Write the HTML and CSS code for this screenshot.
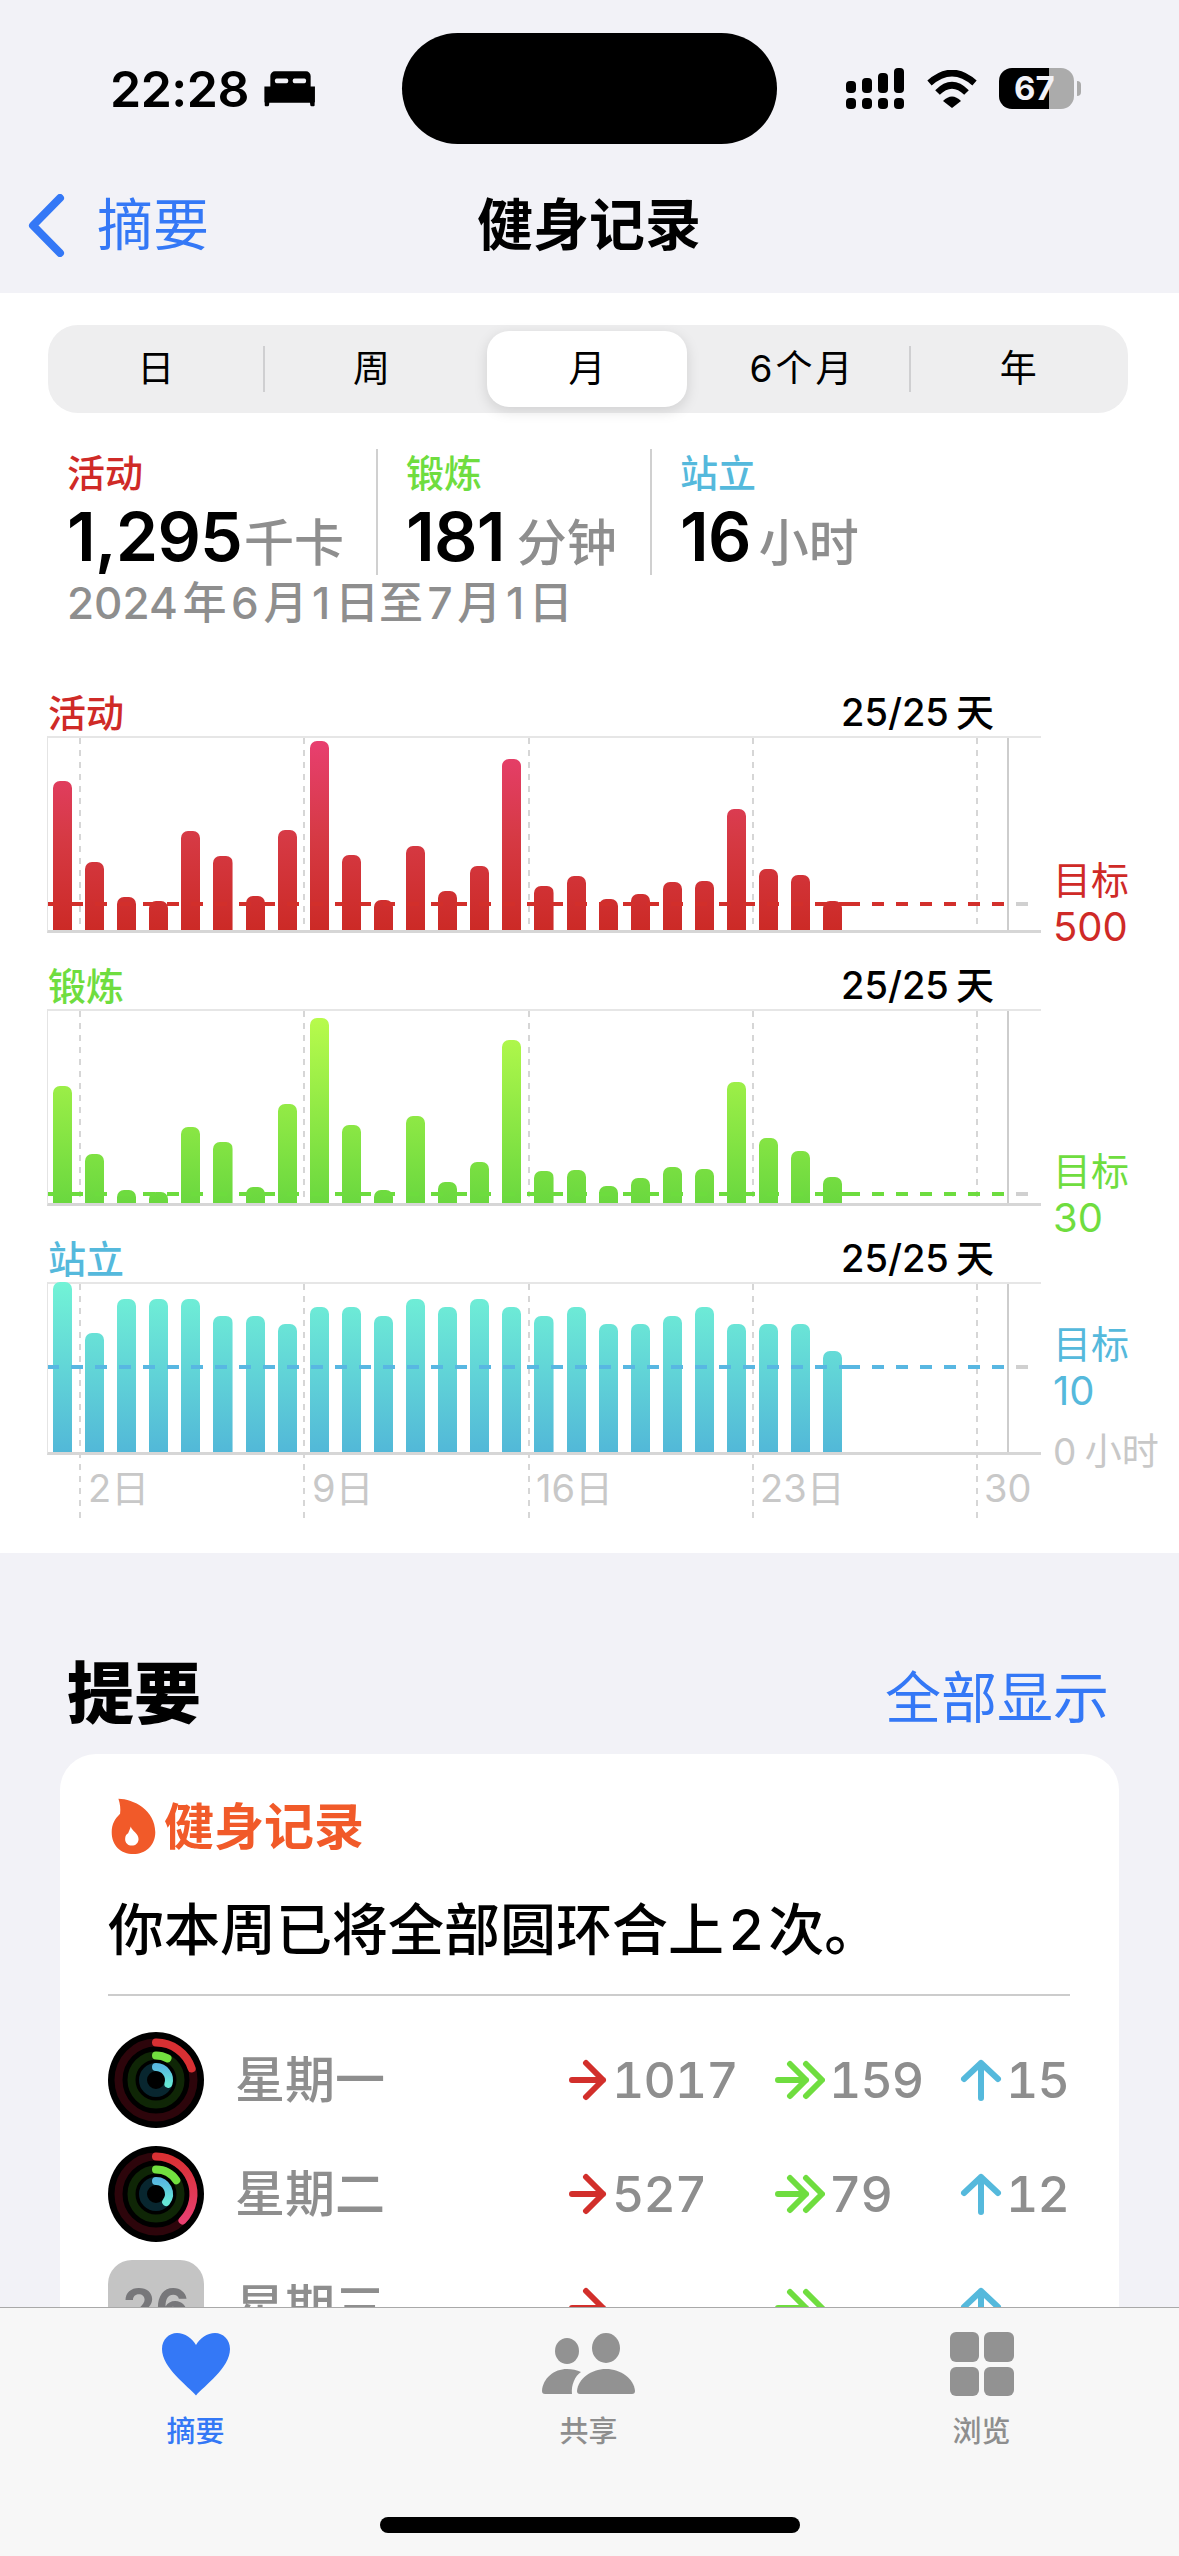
FILE: index.html
```html
<!DOCTYPE html>
<html lang="zh-CN">
<head>
<meta charset="utf-8">
<title>健身记录</title>
<link rel="stylesheet" href="styles.css">
</head>
<body>
<div class="screen">
  <header class="top">
    <div class="status">
      <div class="status-left">
        <span class="time">22:28</span>
        <svg class="bed" viewBox="488 28 160 112"><path d="M524 32h94a14 14 0 0 1 14 14v32h13v47a12 12 0 0 1-1 2v8a3 3 0 0 1-3 3h-6a4 4 0 0 1-4-4l-1-7H507l-1 7a4 4 0 0 1-4 4h-6a3 3 0 0 1-3-3v-8a12 12 0 0 1-1-2V78h18V46a14 14 0 0 1 14-14z"/><rect x="524" y="54" width="40" height="14" rx="5" fill="#f2f2f7"/><rect x="578" y="54" width="40" height="14" rx="5" fill="#f2f2f7"/></svg>
      </div>
      <div class="island"></div>
      <div class="status-right">
        <svg class="signal" viewBox="0 0 58 41"><rect x="0" y="13" width="10" height="12" rx="4"/><rect x="16" y="10" width="10" height="15" rx="4"/><rect x="32" y="5" width="10" height="20" rx="4"/><rect x="48" y="0" width="10" height="25" rx="4"/><rect x="0" y="30" width="10" height="11" rx="4"/><rect x="16" y="30" width="10" height="11" rx="4"/><rect x="32" y="30" width="10" height="11" rx="4"/><rect x="48" y="30" width="10" height="11" rx="4"/></svg>
        <svg class="wifi" viewBox="0 0 50 38"><path class="wifi-arc" d="M2.5 13Q25-7 47.500 13"/><path class="wifi-arc" d="M10.500 22.500Q25 8 39.500 22.500"/><path d="M16 31Q25 22 34 31L25 38Z"/></svg>
        <div class="battery"><span>67</span></div>
      </div>
    </div>
    <nav class="nav">
      <div class="back">
        <svg class="chevron" viewBox="0 0 37 63"><path d="M32 4 5 31.500 32 59"/></svg>
        <span>摘要</span>
      </div>
      <h1 class="nav-title">健身记录</h1>
    </nav>
  </header>

  <section class="sheet">
    <div class="seg">
      <div class="seg-item">日</div>
      <div class="seg-item sep">周</div>
      <div class="seg-item active"><span>月</span></div>
      <div class="seg-item spaced">6个月</div>
      <div class="seg-item sep">年</div>
    </div>

    <div class="stats">
      <div class="stat first">
        <div class="stat-label red">活动</div>
        <div class="stat-value">1,295<small>千卡</small></div>
      </div>
      <div class="stat second">
        <div class="stat-label green">锻炼</div>
        <div class="stat-value">181<small>分钟</small></div>
      </div>
      <div class="stat third">
        <div class="stat-label blue">站立</div>
        <div class="stat-value">16<small>小时</small></div>
      </div>
    </div>
    <div class="date">2024 年 6 月 1 日至 7 月 1 日</div>

    <div class="chart chart-move">
      <div class="chart-head"><span class="red">活动</span><span class="days">25/25 天</span></div>
      <div class="chart-row">
        <div class="plot plot-move">
          <div class="grid"><i></i><i></i><i></i><i></i><i></i></div>
          <div class="grid-end"></div>
          <div class="bars bars-move">
            <div style="height:149px"></div><div style="height:68px"></div><div style="height:33px"></div><div style="height:29px"></div><div style="height:99px"></div><div style="height:74px"></div><div style="height:34px"></div><div style="height:100px"></div><div style="height:189px"></div><div style="height:75px"></div><div style="height:30px"></div><div style="height:84px"></div><div style="height:39px"></div><div style="height:64px"></div><div style="height:171px"></div><div style="height:44px"></div><div style="height:54px"></div><div style="height:31px"></div><div style="height:36px"></div><div style="height:48px"></div><div style="height:49px"></div><div style="height:121px"></div><div style="height:61px"></div><div style="height:55px"></div><div style="height:29px"></div>
          </div>
          <div class="goal goal-move"><b></b><b></b><u></u></div>
        </div>
        <div class="side side-move red">
          <div class="side-goal">目标</div>
          <div class="side-num">500</div>
        </div>
      </div>
    </div>

    <div class="chart chart-ex">
      <div class="chart-head"><span class="green">锻炼</span><span class="days">25/25 天</span></div>
      <div class="chart-row">
        <div class="plot plot-ex">
          <div class="grid"><i></i><i></i><i></i><i></i><i></i></div>
          <div class="grid-end"></div>
          <div class="bars bars-ex">
            <div style="height:117px"></div><div style="height:49px"></div><div style="height:13px"></div><div style="height:11px"></div><div style="height:76px"></div><div style="height:61px"></div><div style="height:16px"></div><div style="height:99px"></div><div style="height:185px"></div><div style="height:78px"></div><div style="height:13px"></div><div style="height:87px"></div><div style="height:21px"></div><div style="height:41px"></div><div style="height:163px"></div><div style="height:32px"></div><div style="height:33px"></div><div style="height:17px"></div><div style="height:25px"></div><div style="height:36px"></div><div style="height:34px"></div><div style="height:121px"></div><div style="height:65px"></div><div style="height:52px"></div><div style="height:26px"></div>
          </div>
          <div class="goal goal-ex"><b></b><b></b><u></u></div>
        </div>
        <div class="side side-ex green">
          <div class="side-goal">目标</div>
          <div class="side-num">30</div>
        </div>
      </div>
    </div>

    <div class="chart chart-st">
      <div class="chart-head"><span class="blue">站立</span><span class="days">25/25 天</span></div>
      <div class="chart-row">
        <div class="plot plot-st">
          <div class="grid grid-long"><i></i><i></i><i></i><i></i><i></i></div>
          <div class="grid-end"></div>
          <div class="bars bars-st">
            <div style="height:170px"></div><div style="height:119px"></div><div style="height:153px"></div><div style="height:153px"></div><div style="height:153px"></div><div style="height:136px"></div><div style="height:136px"></div><div style="height:128px"></div><div style="height:145px"></div><div style="height:145px"></div><div style="height:136px"></div><div style="height:153px"></div><div style="height:145px"></div><div style="height:153px"></div><div style="height:145px"></div><div style="height:136px"></div><div style="height:145px"></div><div style="height:128px"></div><div style="height:128px"></div><div style="height:136px"></div><div style="height:145px"></div><div style="height:128px"></div><div style="height:128px"></div><div style="height:128px"></div><div style="height:101px"></div>
          </div>
          <div class="goal goal-st"><b></b><b></b><u></u></div>
        </div>
        <div class="side side-st blue">
          <div class="side-goal">目标</div>
          <div class="side-num">10</div>
          <div class="side-zero">0 小时</div>
        </div>
      </div>
      <div class="xaxis"><span>2日</span><span>9日</span><span>16日</span><span>23日</span><span>30</span></div>
    </div>
  </section>

  <section class="summary">
    <div class="summary-head">
      <h2>提要</h2>
      <a class="show-all">全部显示</a>
    </div>
    <article class="card">
      <div class="card-head">
        <svg class="flame" viewBox="30 20 140 170"><path d="M55 25C100 25 165 60 165 125C165 165 135 190 100 190C62 190 35 165 35 125C35 100 45 85 60 70C62 55 60 40 55 25Z"/><path class="flame-in" d="M92 108C95 122 115 128 115 145C115 157 106 165 95 165C84 165 75 157 75 145C75 135 80 130 84 128C86 122 90 115 92 108Z"/></svg>
        <span>健身记录</span>
      </div>
      <p class="sentence">你本周已将全部圆环合上 2 次。</p>
      <div class="divider"></div>
      <div class="rows">
        <div class="row">
          <svg class="ring" viewBox="0 0 96 96">
            <defs><linearGradient id="bl1" x1="0" y1="0" x2="0" y2="1"><stop offset="0" stop-color="#58b8e0"/><stop offset="1" stop-color="#66e8d6"/></linearGradient></defs>
            <circle cx="48" cy="48" r="48"/>
            <circle class="tr tr-r" cx="48" cy="48" r="37.500"/><circle class="tr tr-g" cx="48" cy="48" r="24.500"/><circle class="tr tr-b" cx="48" cy="48" r="13"/>
            <path class="arc" stroke="#d83033" d="M48 10.500A37.500 37.500 0 0 1 83.700 36.400"/>
            <path class="arc" stroke="#72e03f" d="M48 23.500A24.500 24.500 0 0 1 59.500 26.400"/>
            <path class="arc" stroke="url(#bl1)" d="M48 35A13 13 0 0 1 60.400 51.800"/>
          </svg>
          <span class="weekday">星期一</span>
          <div class="metric m1"><svg class="arrow a-r" viewBox="0 0 38 42"><path d="M3 21H34M17 4 34 21 17 38"/></svg><span>1017</span></div>
          <div class="metric m2"><svg class="arrow a-g" viewBox="0 0 50 42"><path d="M3 21H31M15 5 31 21 15 37M31 5 47 21 31 37"/></svg><span>159</span></div>
          <div class="metric m3"><svg class="arrow a-b" viewBox="0 0 42 42"><path d="M21 39V4M4 20 21 4 38 20"/></svg><span>15</span></div>
        </div>
        <div class="row">
          <svg class="ring" viewBox="0 0 96 96">
            <defs><linearGradient id="rd2" x1="0" y1="0" x2="0" y2="1"><stop offset="0" stop-color="#d83033"/><stop offset="1" stop-color="#e83f70"/></linearGradient><linearGradient id="bl2" x1="0" y1="0" x2="0" y2="1"><stop offset="0" stop-color="#58b8e0"/><stop offset="1" stop-color="#66e8d6"/></linearGradient></defs>
            <circle cx="48" cy="48" r="48"/>
            <circle class="tr tr-r" cx="48" cy="48" r="37.500"/><circle class="tr tr-g" cx="48" cy="48" r="24.500"/><circle class="tr tr-b" cx="48" cy="48" r="13"/>
            <path class="arc" stroke="url(#rd2)" d="M48 10.500A37.500 37.500 0 0 1 74.500 74.500"/>
            <path class="arc" stroke="#72e03f" d="M48 23.500A24.500 24.500 0 0 1 68.300 34.300"/>
            <path class="arc" stroke="url(#bl2)" d="M48 35A13 13 0 0 1 58.200 56"/>
          </svg>
          <span class="weekday">星期二</span>
          <div class="metric m1"><svg class="arrow a-r" viewBox="0 0 38 42"><path d="M3 21H34M17 4 34 21 17 38"/></svg><span>527</span></div>
          <div class="metric m2"><svg class="arrow a-g" viewBox="0 0 50 42"><path d="M3 21H31M15 5 31 21 15 37M31 5 47 21 31 37"/></svg><span>79</span></div>
          <div class="metric m3"><svg class="arrow a-b" viewBox="0 0 42 42"><path d="M21 39V4M4 20 21 4 38 20"/></svg><span>12</span></div>
        </div>
        <div class="row">
          <div class="tile">26</div>
          <span class="weekday">星期三</span>
          <div class="metric m1"><svg class="arrow a-r" viewBox="0 0 38 42"><path d="M3 21H34M17 4 34 21 17 38"/></svg></div>
          <div class="metric m2"><svg class="arrow a-g" viewBox="0 0 50 42"><path d="M3 21H31M15 5 31 21 15 37M31 5 47 21 31 37"/></svg></div>
          <div class="metric m3"><svg class="arrow a-b" viewBox="0 0 42 42"><path d="M21 39V4M4 20 21 4 38 20"/></svg></div>
        </div>
      </div>
    </article>
  </section>

  <footer class="tabbar">
    <div class="tab tab-on">
      <svg class="tab-icon" viewBox="0 0 96 64"><path d="M48 63.500C40 54 14 36 14 17C14 7.500 21 1 29 1C37 1 44 6 48 13C52 6 59 1 67 1C75 1 82 7.500 82 17C82 36 56 54 48 63.500Z"/></svg>
      <span>摘要</span>
    </div>
    <div class="tab">
      <svg class="tab-icon" viewBox="0 0 96 64"><ellipse cx="26" cy="19" rx="12" ry="13"/><ellipse cx="65" cy="16" rx="14" ry="15"/><path d="M39 62Q36 62 36 59C37 47 50 37 65 37C80 37 93 47 94 59Q94 62 91 62Z"/><path d="M4 62Q1 62 1 59C2 46 13 37 26 37C31 37 36 38 40 40C34 44 30 53 31 62Z"/></svg>
      <span>共享</span>
    </div>
    <div class="tab">
      <div class="tiles"><i></i><i></i><i></i><i></i></div>
      <span>浏览</span>
    </div>
    <div class="home"></div>
  </footer>
</div>
</body>
</html>
```

FILE: styles.css
```css
* { box-sizing: border-box; }
html, body { margin: 0; padding: 0; background: #f2f2f7; }
.screen {
  width: 1179px; height: 2556px; overflow: hidden; position: relative;
  font-family: Inter, "Noto Sans CJK SC", sans-serif; color: #000;
}
.red { color: #cf2a27; }
.green { color: #6fdd3f; }
.blue { color: #55b9dc; }

/* top */
.top { height: 293px; background: #f2f2f7; padding-top: 33px; }
.status { height: 111px; display: flex; align-items: center; }
.status-left { width: 402px; padding-left: 110px; display: flex; align-items: center; gap: 14px; }
.time { font-size: 50px; font-weight: 600; line-height: 60px; letter-spacing: -0.5px; }
.bed { width: 53px; height: 37px; display: block; }
.island { width: 375px; height: 111px; border-radius: 56px; background: #000; }
.status-right { flex: 1; padding-left: 69px; display: flex; align-items: center; }
.signal { width: 58px; height: 41px; display: block; }
.wifi { width: 50px; height: 38px; display: block; margin-left: 23px; }
.wifi-arc { fill: none; stroke: #000; stroke-width: 6.5; }
.battery {
  width: 75px; height: 41px; margin-left: 22px; border-radius: 13px; position: relative;
  background: linear-gradient(90deg, #000 50px, #ababab 50px);
  color: #f2f2f7; font-size: 33px; font-weight: 700; line-height: 41px; padding-left: 15px;
}
.battery::after {
  content: ""; position: absolute; left: 78px; top: 13px; width: 4px; height: 15px;
  background: #ababab; border-radius: 0 6px 6px 0;
}
.nav { height: 60px; margin-top: 51px; display: flex; align-items: center; position: relative; }
.back { display: flex; align-items: center; padding-left: 28px; color: #3478f6; font-size: 56px; line-height: 60px; gap: 32px; }
.chevron { width: 37px; height: 63px; display: block; }
.chevron path { fill: none; stroke: #3478f6; stroke-width: 8; stroke-linecap: round; stroke-linejoin: round; }
.nav-title {
  margin: 0; position: absolute; left: 0; right: 0; top: 0; text-align: center;
  font-size: 56px; font-weight: 600; line-height: 60px; padding-right: 1px;
}

/* sheet */
.sheet { height: 1260px; background: #fff; padding-top: 32px; }
.seg {
  margin-left: 48px; width: 1080px; height: 88px; border-radius: 30px; background: #eeeeef;
  display: flex; padding-right: 2px;
}
.seg-item {
  flex: 1; display: flex; align-items: center; justify-content: center; position: relative;
  font-size: 37px; line-height: 88px;
}
.seg-item.spaced { letter-spacing: 3px; }
.seg-item.sep::before {
  content: ""; position: absolute; left: -1px; top: 21px; width: 2px; height: 46px; background: #cfcfd1;
}
.seg-item.active span {
  width: 200px; height: 76px; border-radius: 22px; background: #fff; text-align: center; line-height: 76px;
  box-shadow: 0 4px 14px rgba(0,0,0,.13);
}
.stats { display: flex; margin-top: 36px; padding-left: 67px; height: 126px; }
.stat { height: 126px; }
.stat.first { width: 311px; border-right: 2px solid #d0d0d0; }
.stat.second { width: 274px; padding-left: 28px; border-right: 2px solid #d0d0d0; }
.stat.third { padding-left: 28px; }
.stat-label { font-size: 38px; font-weight: 500; line-height: 46px; padding-top: 1px; }
.stat-value { font-size: 68px; font-weight: 600; line-height: 80px; letter-spacing: -0.8px; white-space: nowrap; }
.stat-value small { font-size: 50px; font-weight: 500; color: #8e8e8e; margin-left: 8px; letter-spacing: 0; }
.first .stat-value small { margin-left: 2px; }
.second .stat-value small { margin-left: 12px; }
.date { height: 56px; padding-left: 67px; font-size: 44px; font-weight: 500; line-height: 56px; color: #8e8e8e; word-spacing: -7.1px; white-space: nowrap; }

/* charts */
.chart-head {
  width: 946px; margin-left: 48px; height: 46px; display: flex; justify-content: space-between;
  align-items: center; font-size: 38px; font-weight: 500; line-height: 46px;
}
.days { font-size: 38px; font-weight: 500; word-spacing: -3px; margin-top: -2px; }
.chart-move { margin-top: 59px; }
.chart-ex { margin-top: 30px; }
.chart-st { margin-top: 30px; }
.chart-row { display: flex; }
.plot {
  width: 994px; flex: none; margin-left: 47px; position: relative;
  border-top: 2px solid #e6e6e6; border-bottom: 3px solid #d6d6d6; border-left: 1px solid #e4e4e4;
}
.plot-move, .plot-ex { height: 197px; }
.plot-st { height: 173px; }
.grid { position: absolute; left: 0; top: 0; bottom: 0; display: flex; gap: 222.25px; padding-left: 31px; }
.grid-long { bottom: -67px; }
.grid i {
  display: block; width: 2px; height: 100%;
  background: repeating-linear-gradient(180deg, #d6d6d6 0 6px, transparent 6px 12px);
}
.grid-end { position: absolute; left: 959px; top: 0; bottom: 0; width: 2px; background: #cdcdcd; }
.bars { position: relative; height: 100%; display: flex; align-items: flex-end; gap: 13px; padding-left: 5px; }
.bars div { width: 19.100px; flex: none; border-radius: 7px 7px 0 0; background-repeat: no-repeat; background-position: bottom; }
.bars-move div { background-image: linear-gradient(180deg, #e83f70, #d63a45 50%, #cc2a26); background-size: 100% 190px; }
.bars-ex div { background-image: linear-gradient(180deg, #b8fb4c, #6ad83f); background-size: 100% 186px; }
.bars-st div { background-image: linear-gradient(180deg, #72f3d6, #52b8d8); background-size: 100% 170px; }
.goal { position: absolute; left: 0; display: flex; height: 4px; }
.goal-move { bottom: 24px; color: #d22f2b; }
.goal-ex { bottom: 7px; color: #6ddc3e; }
.goal-st { bottom: 83px; color: #58b7e2; }
.goal b {
  display: block; height: 4px;
  background-image: linear-gradient(90deg, currentColor 50%, transparent 50%);
  background-size: 24px 100%;
}
.goal b:nth-child(1) { width: 800px; background-position: -1px 0; }
.goal b:nth-child(2) { width: 160px; }
.goal u {
  display: block; width: 31px; height: 4px;
  background-image: linear-gradient(90deg, transparent 8px, #d0d0d0 8px, #d0d0d0 20px, transparent 20px 32px);
  background-size: 32px 100%;
}
.side { width: 136px; flex: none; margin-left: 12px; height: 0; white-space: nowrap; }
.side-move { padding-top: 121px; }
.side-ex { padding-top: 139px; }
.side-st { padding-top: 39px; }
.side-goal { font-size: 38px; line-height: 46px; }
.side-num { font-size: 40px; line-height: 48px; }
.side-zero { font-size: 37px; line-height: 46px; color: #c8c8c8; margin-top: 14px; word-spacing: -2px; }
.xaxis { display: flex; margin-left: 88px; margin-top: 10px; height: 46px; }
.xaxis span { width: 224px; flex: none; font-size: 38px; line-height: 46px; color: #c8c8c8; }

/* summary */
.summary { padding-top: 101px; }
.summary-head { height: 80px; padding: 0 70px 0 67px; display: flex; justify-content: space-between; align-items: center; }
.summary-head h2 { margin: 0; font-size: 67px; font-weight: 900; line-height: 80px; }
.show-all { font-size: 56px; line-height: 64px; color: #3478f6; padding-top: 8px; }
.card { margin: 20px 0 0 60px; width: 1059px; height: 900px; background: #fff; border-radius: 36px; padding: 43px 49px 0 48px; }
.card-head { display: flex; align-items: center; height: 57px; gap: 7px; margin-left: 2px; color: #f15a29; font-size: 50px; font-weight: 600; line-height: 57px; }
.card-head span { padding-top: 4px; }
.flame { width: 47px; height: 57px; display: block; fill: #f15a29; }
.flame-in { fill: #fff; }
.sentence { margin: 36px 0 0; font-size: 56px; font-weight: 500; line-height: 80px; word-spacing: -10px; white-space: nowrap; }
.divider { margin-top: 24px; height: 1.500px; background: #ccc; }
.rows { margin-top: 36px; display: flex; flex-direction: column; gap: 18px; }
.row { height: 96px; display: flex; align-items: center; }
.ring { width: 96px; height: 96px; display: block; flex: none; }
.tr { fill: none; stroke-width: 8; }
.tr-r { stroke: #2d050b; }
.tr-g { stroke: #0f2606; }
.tr-b { stroke: #08262f; }
.arc { fill: none; stroke-width: 8; stroke-linecap: round; }
.tile {
  width: 96px; height: 96px; flex: none; border-radius: 24px; background: #c4c4c4; color: #77777a;
  font-size: 52px; font-weight: 700; text-align: center; line-height: 96px;
}
.weekday { width: 365px; flex: none; padding-left: 31px; font-size: 50px; font-weight: 500; line-height: 60px; color: #8e8e8e; }
.metric { display: flex; align-items: center; flex: none; font-size: 50px; font-weight: 500; line-height: 60px; color: #8e8e8e; font-feature-settings: "tnum"; letter-spacing: -1px; }
.m1 { width: 206px; }
.m2 { width: 185px; }
.m3 { width: 110px; }
.arrow { display: block; flex: none; height: 42px; fill: none; stroke-width: 6; stroke-linecap: round; stroke-linejoin: round; }
.a-r { width: 38px; stroke: #d22f2b; margin-right: 5px; }
.a-g { width: 50px; stroke: #6fdd3f; margin-right: 4px; }
.a-b { width: 42px; stroke: #55b9dc; margin-right: 4px; }

/* tab bar */
.tabbar {
  position: absolute; left: 0; right: 0; top: 2307px; bottom: 0; display: flex;
  background: #f7f7f7; border-top: 1px solid #a9a9a9;
}
.tab { width: 393px; display: flex; flex-direction: column; align-items: center; padding: 24px 2px 0 0; color: #8e8e8e; font-size: 29px; font-weight: 500; line-height: 40px; }
.tab span { margin-top: 16px; }
.tab-icon { width: 96px; height: 64px; display: block; fill: #929292; }
.tab-on { color: #3478f6; }
.tab-on .tab-icon { fill: #3478f6; }
.tiles { width: 64px; height: 64px; display: grid; grid-template-columns: 1fr 1fr; gap: 5px; }
.tiles i { display: block; background: #929292; border-radius: 6px; }
.home { position: absolute; left: 380px; top: 209px; width: 420px; height: 16px; border-radius: 8px; background: #000; }
```
